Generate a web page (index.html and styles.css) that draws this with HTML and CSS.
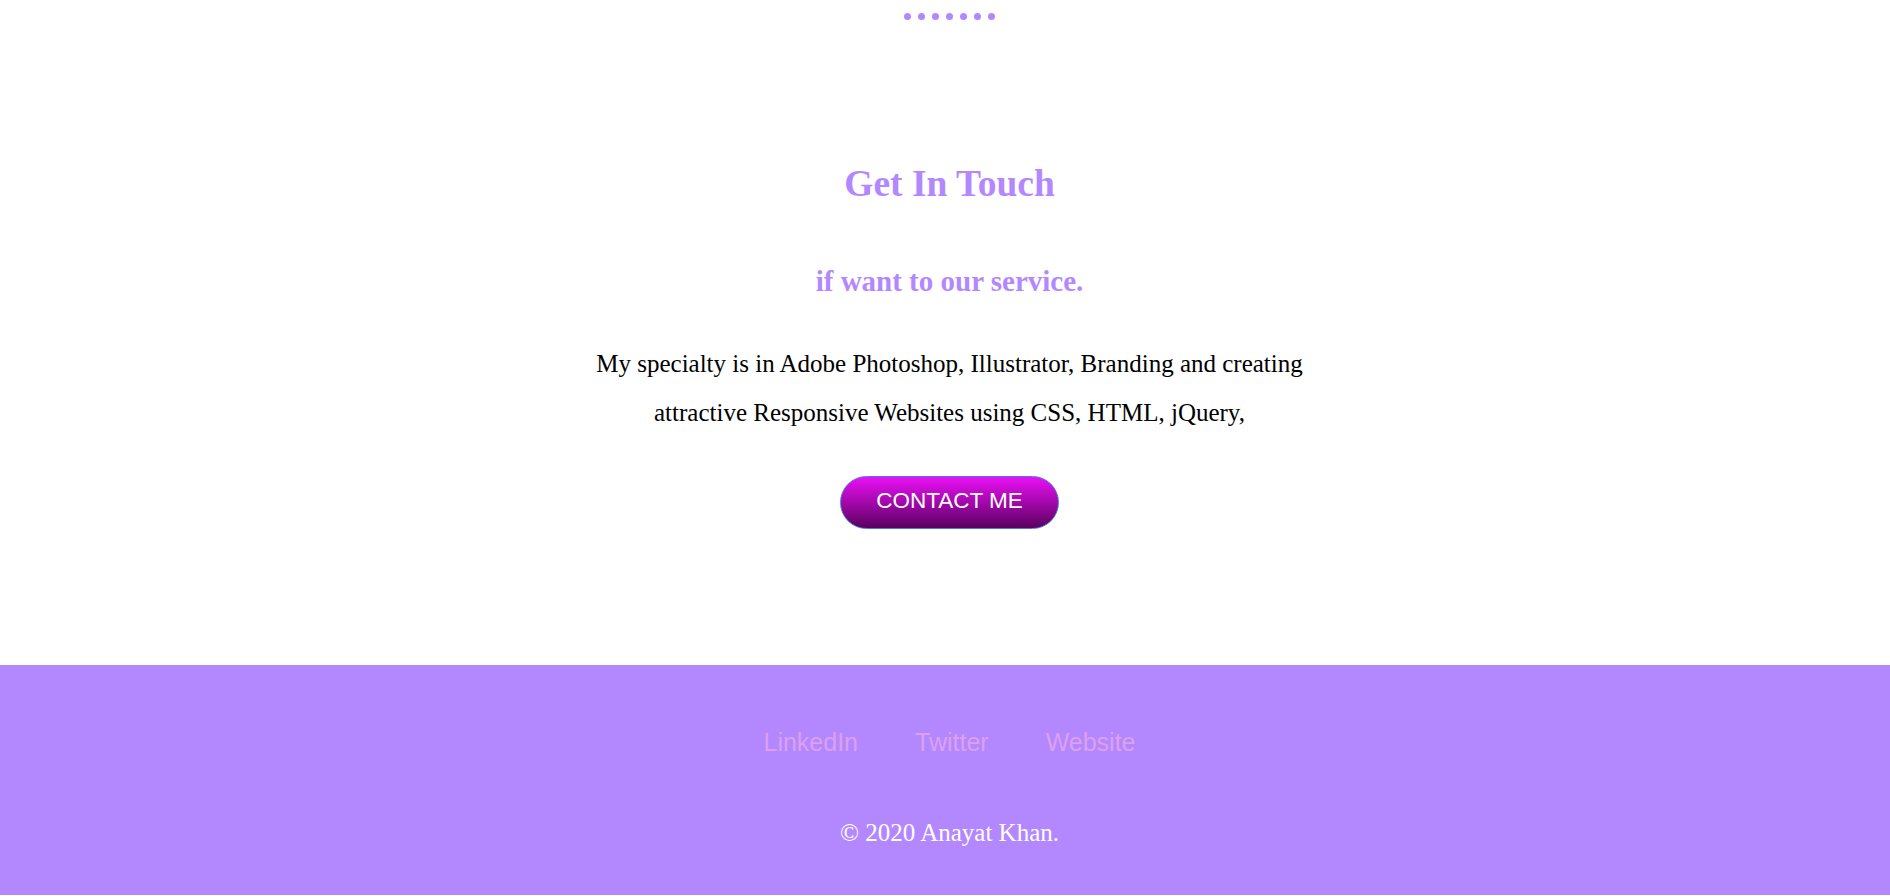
FILE: index.html
```html
<!DOCTYPE html>
<html lang="en">
<head>
<meta charset="utf-8">
<title>Get In Touch</title>
<link rel="stylesheet" href="styles.css">
</head>
<body>
<div class="dots">
  <span class="dot"></span><span class="dot"></span><span class="dot"></span><span class="dot"></span><span class="dot"></span><span class="dot"></span><span class="dot"></span>
</div>
<section class="contact">
  <h2 class="contact-title">Get In Touch</h2>
  <h3 class="contact-sub">if want to our service.</h3>
  <p class="contact-text">My specialty is in Adobe Photoshop, Illustrator, Branding and creating attractive Responsive Websites using CSS, HTML, jQuery,</p>
  <a class="btn" href="#">CONTACT ME</a>
</section>
<footer class="footer">
  <nav class="footer-links">
    <a href="#">LinkedIn</a>
    <a href="#">Twitter</a>
    <a href="#">Website</a>
  </nav>
  <p class="copyright">© 2020 Anayat Khan.</p>
</footer>
</body>
</html>
```
FILE: styles.css
```css
html, body {
  margin: 0;
  padding: 0;
  background: #fff;
}
body {
  font-family: "Liberation Serif", "Times New Roman", serif;
}
.dots {
  display: flex;
  justify-content: center;
  gap: 7px;
  padding: 13px 0 0 9px;
  height: 7px;
}
.dot {
  width: 7px;
  height: 7px;
  border-radius: 50%;
  background: #b388ff;
}
.contact {
  display: flex;
  flex-direction: column;
  align-items: center;
  text-align: center;
  padding: 0 0 136px 9px;
}
.contact-title {
  margin: 145px 0 0;
  font-size: 37.5px;
  line-height: 38px;
  font-weight: bold;
  color: #b388ff;
}
.contact-sub {
  margin: 64px 0 0;
  font-size: 29px;
  line-height: 29px;
  font-weight: bold;
  color: #b388ff;
}
.contact-text {
  margin: 43px 0 0;
  max-width: 760px;
  font-size: 25px;
  line-height: 49px;
  color: #000;
}
.btn {
  margin-top: 39px;
  display: inline-block;
  padding: 11px 35px 15px;
  font-family: "Liberation Sans", Arial, sans-serif;
  font-size: 22.5px;
  line-height: 25px;
  color: #fff;
  text-decoration: none;
  border: 1px solid #4a78dc;
  border-radius: 30px;
  background: linear-gradient(to bottom, #ea10f6, #5a005e);
}
.footer {
  background: #b388ff;
  padding: 65px 0 50px 9px;
  display: flex;
  flex-direction: column;
  align-items: center;
}
.footer-links {
  display: flex;
  gap: 57px;
}
.footer-links a {
  font-family: "Liberation Sans", Arial, sans-serif;
  font-size: 25px;
  line-height: 25px;
  color: #dda0ee;
  text-decoration: none;
}
.copyright {
  margin: 65px 0 0;
  font-size: 25px;
  line-height: 25px;
  color: #fff;
}
```
